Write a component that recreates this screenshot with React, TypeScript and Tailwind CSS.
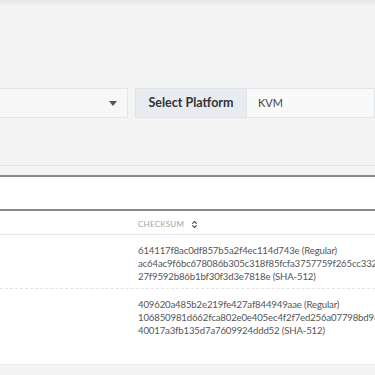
import { ChevronsUpDown } from "lucide-react";

const rows = [
  [
    "614117f8ac0df857b5a2f4ec114d743e (Regular)",
    "ac64ac9f6bc678086b305c318f85fcfa3757759f265cc332",
    "27f9592b86b1bf30f3d3e7818e (SHA-512)",
  ],
  [
    "409620a485b2e219fe427af844949aae (Regular)",
    "106850981d662fca802e0e405ec4f2f7ed256a07798bd96",
    "40017a3fb135d7a7609924ddd52 (SHA-512)",
  ],
];

export default function App() {
  return (
    <div
      className="relative h-[375px] w-[375px] overflow-hidden bg-[#f4f4f4] text-[#555]"
      style={{ fontFamily: "Lato, 'Open Sans', sans-serif" }}
    >
      {/* top shadow */}
      <div className="absolute inset-x-0 top-0 h-[6px] bg-gradient-to-b from-[#e4e4e4] to-transparent" />

      {/* filter row */}
      <div className="flex pt-[88px] h-[165px]">
        <div className="ml-[-20px] flex h-[30px] w-[148px] items-center justify-end border border-[#e3e6e8] bg-[#f7f7f7] pr-[10px]">
          <span className="h-0 w-0 border-x-[4.5px] border-t-[5px] border-x-transparent border-t-[#555]" />
        </div>
        <div className="ml-[7px] flex h-[30px] flex-1">
          <div className="flex w-[112px] items-center justify-center border border-[#dfe3e8] bg-[#e8ebef] text-[12.5px] font-bold text-[#333]">
            Select Platform
          </div>
          <div className="flex flex-1 items-center border border-l-0 border-[#e3e6e8] bg-[#f9f9f9] pl-[11px] text-[11px] text-[#444]">
            KVM
          </div>
        </div>
      </div>

      <div className="h-[10px] border-t border-[#e2e5e8]" />

      {/* panel */}
      <div className="border-t-2 border-[#8a8a8a] bg-white">
        <div className="h-[34px] border-b-2 border-[#8a8a8a]" />
        <div className="flex h-[24px] items-center border-b border-[#e6e8eb] pt-[3px]">
          <div className="w-[138px]" />
          <span className="text-[8px] tracking-[0.03em] text-[#a0a4a8]">
            CHECKSUM
          </span>
          <ChevronsUpDown size={9} strokeWidth={3} className="ml-[6px] text-[#555]" />
        </div>
        {rows.map((lines, i) => (
          <div
            key={i}
            className={`flex ${
              i === 0
                ? "h-[54px] border-b border-dashed border-[#e2e4e7]"
                : "h-[76px] border-b border-[#e6e8eb]"
            } pt-[9px]`}
          >
            <div className="w-[138px] shrink-0" />
            <div className="whitespace-nowrap text-[9.6px] leading-[13px] tracking-[-0.15px] text-[#555]">
              {lines.map((l) => (
                <div key={l}>{l}</div>
              ))}
            </div>
          </div>
        ))}
      </div>
    </div>
  );
}
